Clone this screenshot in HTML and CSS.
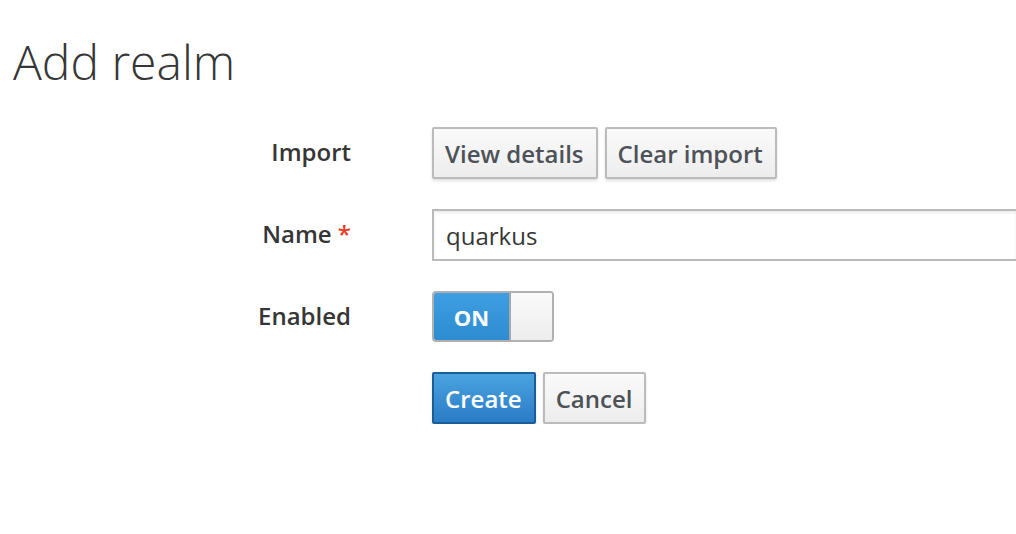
FILE: index.html
```html
<!DOCTYPE html>
<html lang="en">
<head>
<meta charset="utf-8">
<title>Add realm</title>
<link rel="stylesheet" href="styles.css">
</head>
<body>
<h1 class="page-title">Add realm</h1>
<form class="realm-form">
  <label class="form-label">Import</label>
  <div class="form-control-group">
    <button type="button" class="btn">View details</button>
    <button type="button" class="btn">Clear import</button>
  </div>

  <label class="form-label" for="name">Name <span class="required">*</span></label>
  <div class="form-control-group">
    <input id="name" class="text-input" type="text" value="quarkus">
  </div>

  <label class="form-label">Enabled</label>
  <div class="form-control-group">
    <div class="switch">
      <span class="switch-on">ON</span>
      <span class="switch-handle"></span>
    </div>
  </div>

  <span></span>
  <div class="form-control-group">
    <button type="button" class="btn btn-primary">Create</button>
    <button type="button" class="btn">Cancel</button>
  </div>
</form>
</body>
</html>
```
FILE: styles.css
```css
* { box-sizing: border-box; }
html, body { margin: 0; padding: 0; background: #fff; }
body {
  font-family: "Open Sans", "Noto Sans", sans-serif;
  color: #363636;
  overflow: hidden;
}
.page-title {
  margin: 35px 0 0 13px;
  font-size: 48px;
  line-height: 53px;
  font-weight: 300;
  color: #363636;
}
.realm-form {
  display: grid;
  grid-template-columns: 351px 1fr;
  column-gap: 81px;
  row-gap: 30px;
  margin-top: 39px;
  align-items: center;
}
.form-label {
  text-align: right;
  font-size: 24px;
  font-weight: 600;
  color: #363636;
  padding-bottom: 3px;
}
.required { color: #ee3b24; }
.form-control-group {
  display: flex;
  gap: 7px;
  align-items: center;
  min-width: 0;
}
.btn {
  height: 52px;
  padding: 0 12px 0 11px;
  font-family: inherit;
  font-size: 24px;
  font-weight: 600;
  color: #4d5258;
  background: linear-gradient(#fafafa, #ededed);
  border: 2px solid #bbb;
  border-radius: 2px;
  box-shadow: 0 2px 3px rgba(3,3,3,0.12);
}
.btn-primary {
  color: #fff;
  background: linear-gradient(#4aa3df, #2a7cc7);
  border-color: #1d5d95;
}
.text-input {
  width: 100%;
  margin-right: -20px;
  height: 52px;
  padding: 0 12px;
  font-family: inherit;
  font-size: 24px;
  color: #363636;
  border: 2px solid #bababa;
  border-right: none;
  border-radius: 0;
  box-shadow: inset 0 2px 3px rgba(3,3,3,0.08);
  outline: none;
}
.switch {
  display: flex;
  width: 122px;
  height: 51px;
  border: 2px solid #b0b0b0;
  border-radius: 4px;
  overflow: hidden;
}
.switch-on {
  width: 77px;
  display: flex;
  align-items: center;
  justify-content: center;
  background: linear-gradient(#3e9fe2, #2e8bd0);
  color: #fff;
  font-size: 22px;
  font-weight: 700;
  border-right: 2px solid #a8a8a8;
}
.switch-handle {
  flex: 1;
  background: linear-gradient(#fafafa, #ededed);
}
```
